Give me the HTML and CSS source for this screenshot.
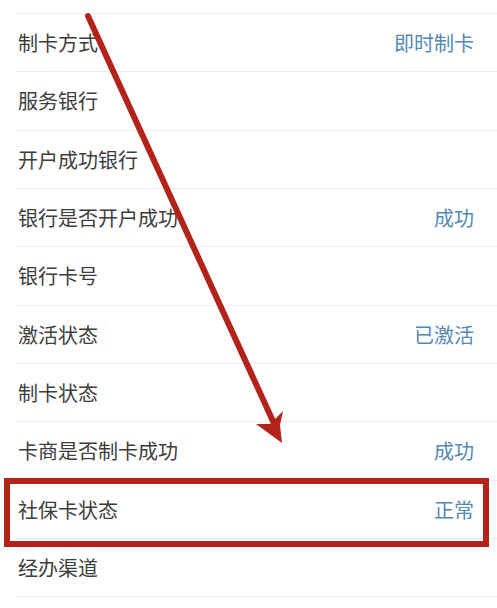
FILE: index.html
```html
<!DOCTYPE html>
<html lang="zh">
<head>
<meta charset="utf-8">
<link rel="stylesheet" href="styles.css">
</head>
<body>
<div class="page">
  <div class="list">
    <div class="top"></div>
    <div class="row"><span class="label">制卡方式</span><span class="value">即时制卡</span></div>
    <div class="row"><span class="label">服务银行</span><span class="value"></span></div>
    <div class="row"><span class="label">开户成功银行</span><span class="value"></span></div>
    <div class="row"><span class="label">银行是否开户成功</span><span class="value">成功</span></div>
    <div class="row"><span class="label">银行卡号</span><span class="value"></span></div>
    <div class="row"><span class="label">激活状态</span><span class="value">已激活</span></div>
    <div class="row"><span class="label">制卡状态</span><span class="value"></span></div>
    <div class="row"><span class="label">卡商是否制卡成功</span><span class="value">成功</span></div>
    <div class="row"><span class="label">社保卡状态</span><span class="value">正常</span></div>
    <div class="row"><span class="label">经办渠道</span><span class="value"></span></div>
  </div>
  <div class="highlight"></div>
  <svg class="arrow" width="497" height="608" viewBox="0 0 497 608">
    <line x1="88" y1="16" x2="277" y2="430" stroke="#b3231a" stroke-width="6" stroke-linecap="round"/>
    <polygon points="282,443 256,424 270,424 283,411 280,425" fill="#b3231a"/>
  </svg>
</div>
</body>
</html>
```
FILE: styles.css
```css
html, body {
  margin: 0;
  padding: 0;
  background: #ffffff;
}
.page {
  position: relative;
  width: 497px;
  height: 608px;
  overflow: hidden;
  font-family: "Noto Sans CJK SC", "Noto Sans", sans-serif;
}
.list {
  margin-left: 16px;
}
.top {
  height: 14px;
  border-bottom: 1px solid #ececec;
  box-sizing: border-box;
}
.row {
  height: 58.33px;
  box-sizing: border-box;
  border-bottom: 1px solid #ececec;
  display: flex;
  align-items: center;
  justify-content: space-between;
  padding: 0 23px 0 2px;
  font-size: 20px;
}
.label {
  color: #3d3d3d;
}
.value {
  color: #5389b2;
}
.highlight {
  position: absolute;
  left: 4px;
  top: 478px;
  width: 485px;
  height: 69px;
  box-sizing: border-box;
  border: 6px solid #b3231a;
}
.arrow {
  position: absolute;
  left: 0;
  top: 0;
}
```
